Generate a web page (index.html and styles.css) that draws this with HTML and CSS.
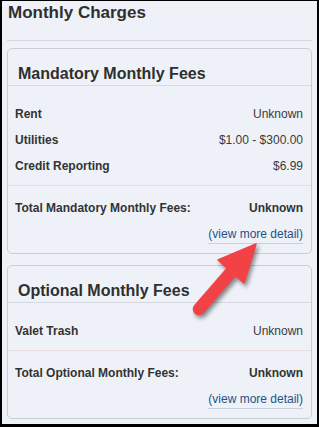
FILE: index.html
```html
<!DOCTYPE html>
<html lang="en">
<head>
<meta charset="utf-8">
<title>Monthly Charges</title>
<link rel="stylesheet" href="styles.css">
</head>
<body>
<main class="page">
  <h1 class="page-title">Monthly Charges</h1>
  <hr class="rule">

  <section class="panel">
    <h2 class="panel-title">Mandatory Monthly Fees</h2>
    <div class="fee-list">
      <div class="fee-row"><span class="fee-name">Rent</span><span class="fee-value">Unknown</span></div>
      <div class="fee-row"><span class="fee-name">Utilities</span><span class="fee-value">$1.00 - $300.00</span></div>
      <div class="fee-row"><span class="fee-name">Credit Reporting</span><span class="fee-value">$6.99</span></div>
    </div>
    <div class="fee-total">
      <div class="fee-row"><span class="fee-name">Total Mandatory Monthly Fees:</span><span class="fee-value strong">Unknown</span></div>
      <div class="detail-row"><a class="detail-link" href="#">(view more detail)</a></div>
    </div>
  </section>

  <section class="panel panel-next">
    <h2 class="panel-title">Optional Monthly Fees</h2>
    <div class="fee-list">
      <div class="fee-row"><span class="fee-name">Valet Trash</span><span class="fee-value">Unknown</span></div>
    </div>
    <div class="fee-total">
      <div class="fee-row"><span class="fee-name">Total Optional Monthly Fees:</span><span class="fee-value strong">Unknown</span></div>
      <div class="detail-row"><a class="detail-link" href="#">(view more detail)</a></div>
    </div>
  </section>

  <!-- callout arrow pointing at the first detail link -->
  <svg class="callout-arrow" width="80" height="95" viewBox="0 0 80 95" aria-hidden="true">
    <line x1="14" y1="74" x2="47" y2="36" stroke="#f24245" stroke-width="12.5" stroke-linecap="round"/>
    <polygon points="71,9 33,25 59,48" fill="#f24245" stroke="#f24245" stroke-width="1.5" stroke-linejoin="round"/>
  </svg>
</main>
</body>
</html>
```

FILE: styles.css
```css
html {
  background: #000;
}

body {
  margin: 1px 2px 3px 2px;
  height: 423px;
  background: #eef2f8;
  font-family: "Liberation Sans", Arial, sans-serif;
  color: #333;
}

.page {
  position: relative;
  padding: 2px 5px 0;
}

.page-title {
  margin: 0;
  font-size: 17px;
  line-height: 20px;
  font-weight: bold;
  color: #2f2f2f;
  padding-left: 1px;
}

.rule {
  margin: 17px 0 7px;
  height: 1px;
  border: 0;
  background: #d3d7de;
}

.panel {
  border: 1px solid #c9ced6;
  border-radius: 5px;
}

.panel-next {
  margin-top: 11px;
}

.panel-title {
  margin: 0;
  padding: 15px 10px 1px;
  font-size: 16px;
  line-height: 20px;
  font-weight: bold;
  color: #2f2f2f;
  border-bottom: 1px solid #d6d9df;
}

.fee-list {
  padding: 15px 8px 6px 7px;
}

.fee-total {
  padding: 9px 8px 6px 7px;
  border-top: 1px solid #e9dcdd;
}

.fee-row {
  display: flex;
  justify-content: space-between;
  font-size: 12px;
  line-height: 26px;
}

.fee-name {
  font-weight: bold;
  color: #333;
}

.fee-value {
  color: #3a3a3a;
}

.fee-value.strong {
  font-weight: bold;
  color: #333;
}

.detail-row {
  font-size: 12px;
  line-height: 26px;
  text-align: right;
}

.detail-link {
  display: inline-block;
  line-height: 14px;
  padding-bottom: 2px;
  border-bottom: 1px solid #c9d1dd;
  color: #24508a;
  text-decoration: none;
}

.callout-arrow {
  position: absolute;
  left: 183px;
  top: 234px;
  pointer-events: none;
  filter: drop-shadow(2px 3px 2px rgba(0, 0, 0, 0.45));
}
```
